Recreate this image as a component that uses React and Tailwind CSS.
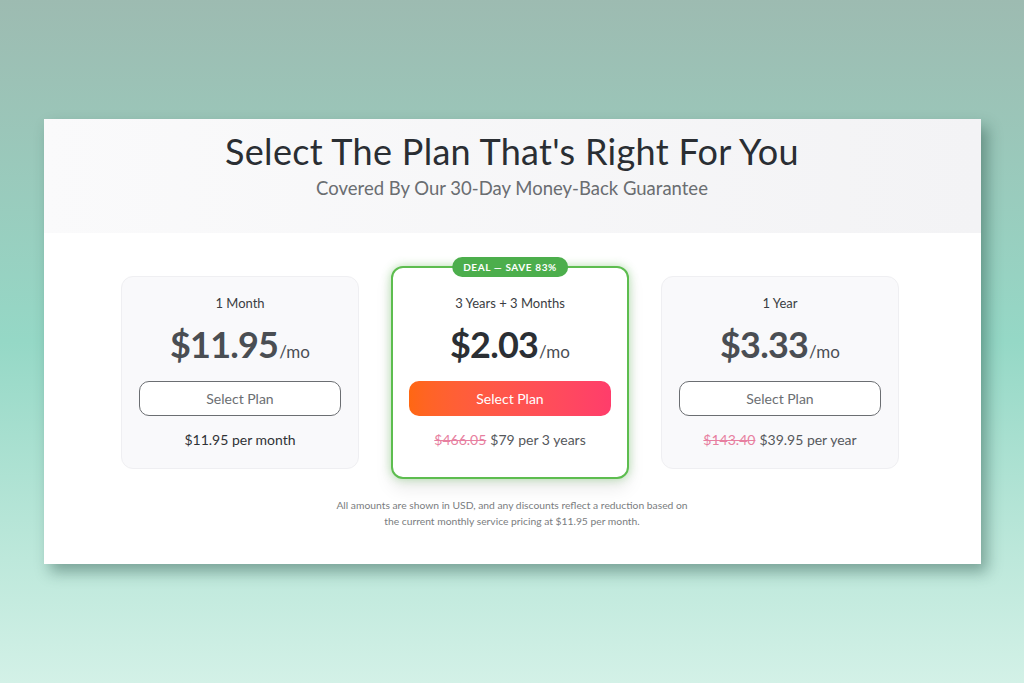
import React from "react";

const plans = [
  {
    label: "1 Month",
    price: "$11.95",
    note: "$11.95 per month",
    old: null,
  },
  {
    label: "3 Years + 3 Months",
    price: "$2.03",
    note: "$79 per 3 years",
    old: "$466.05",
    featured: true,
  },
  {
    label: "1 Year",
    price: "$3.33",
    note: "$39.95 per year",
    old: "$143.40",
  },
];

function PlanCard({ plan }) {
  if (plan.featured) {
    return (
      <div className="relative w-[238px] h-[213px] rounded-xl border-2 border-[#5dbd4f] bg-white shadow-[0_0_10px_rgba(93,189,79,0.45),0_10px_18px_rgba(0,0,0,0.08)] flex flex-col items-center pt-[25px]">
        <div className="absolute -top-[11px] left-1/2 -translate-x-1/2 h-[20px] px-[11px] rounded-full bg-[#4cae4c] text-white text-[10px] font-bold tracking-[0.6px] flex items-center whitespace-nowrap">
          DEAL — SAVE 83%
        </div>
        <CardBody plan={plan} />
      </div>
    );
  }
  return (
    <div className="w-[238px] h-[193px] rounded-xl border border-[#efeff2] bg-[#f9f9fb] flex flex-col items-center pt-[16px]">
      <CardBody plan={plan} />
    </div>
  );
}

function CardBody({ plan }) {
  return (
    <>
      <div className="text-[13px] leading-5 text-[#3a3d42]">{plan.label}</div>
      <div className="mt-[9px] flex items-baseline h-[44px]">
        <span
          className={
            "text-[36px] leading-[44px] font-bold tracking-[-0.8px] " +
            (plan.featured ? "text-[#2b2f34]" : "text-[#4a4e53]")
          }
        >
          {plan.price}
        </span>
        <span className="text-[17px] text-[#4a4e53] ml-[1px]">/mo</span>
      </div>
      {plan.featured ? (
        <button className="mt-[15px] w-[202px] h-[35px] rounded-[10px] bg-gradient-to-r from-[#ff6712] to-[#ff3d6b] text-white text-[14px]">
          Select Plan
        </button>
      ) : (
        <button className="mt-[15px] w-[202px] h-[35px] rounded-[10px] border-[1.5px] border-[#6b6e72] bg-white text-[#6b6e72] text-[14px]">
          Select Plan
        </button>
      )}
      <div className="mt-[14px] text-[14px] leading-5 text-[#2f3236]">
        {plan.old && (
          <span className="line-through text-[#e77fa0] mr-[4px]">{plan.old}</span>
        )}
        <span className={plan.old ? "text-[#55585c]" : ""}>{plan.note}</span>
      </div>
    </>
  );
}

export default function App() {
  return (
    <main
      className="h-screen w-full flex items-center justify-center bg-gradient-to-b from-[#9dbbb1] via-[#95d8c6] to-[#d3f1e7]"
      style={{ fontFamily: "Lato, 'Noto Sans', sans-serif" }}
    >
      <div className="w-[937px] h-[445px] bg-white shadow-[6px_8px_14px_rgba(20,60,50,0.4)] flex flex-col">
        <div className="h-[114px] bg-gradient-to-r from-[#fafafb] to-[#f3f3f5] flex flex-col items-center pt-[9px]">
          <h1 className="text-[36px] leading-[46px] text-[#2a2e33] tracking-[0.3px]">
            Select The Plan That's Right For You
          </h1>
          <p className="mt-[1px] text-[18.5px] leading-[26px] text-[#6a6d71]">
            Covered By Our 30-Day Money-Back Guarantee
          </p>
        </div>
        <div className="mt-[33px] flex items-center justify-center gap-[32px] pr-[4px]">
          {plans.map((p) => (
            <PlanCard key={p.label} plan={p} />
          ))}
        </div>
        <div className="mt-[18px] text-center text-[10.3px] leading-4 text-[#7a7d80]">
          <p>All amounts are shown in USD, and any discounts reflect a reduction based on</p>
          <p>the current monthly service pricing at $11.95 per month.</p>
        </div>
      </div>
    </main>
  );
}
